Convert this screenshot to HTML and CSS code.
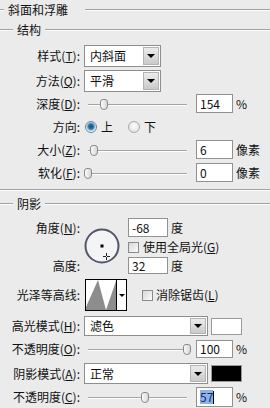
FILE: index.html
```html
<!DOCTYPE html>
<html lang="zh-CN">
<head>
    <meta charset="UTF-8">
    <meta name="viewport" content="width=device-width, initial-scale=1.0">
    <title>斜面和浮雕</title>
    <link rel="stylesheet" href="styles.css">
</head>
<body>
    <div class="panel">
        <div class="legend legend-main"><span class="lead"></span><span class="caption">斜面和浮雕</span><span class="rule"></span></div>
        <div class="legend legend-sub"><span class="lead"></span><span class="caption">结构</span><span class="rule"></span></div>

        <div class="row row-style">
            <span class="lbl">样式(<u>T</u>):</span>
            <div class="select sel-short"><span class="sel-text">内斜面</span><span class="sel-btn"><i class="tri"></i></span></div>
        </div>
        <div class="row row-method">
            <span class="lbl">方法(<u>Q</u>):</span>
            <div class="select sel-short"><span class="sel-text">平滑</span><span class="sel-btn"><i class="tri"></i></span></div>
        </div>
        <div class="row row-depth">
            <span class="lbl">深度(<u>D</u>):</span>
            <div class="slider"><span class="track"></span><span class="thumb" style="left:16px"></span></div>
            <div class="field">154</div><span class="unit">%</span>
        </div>
        <div class="row row-dir">
            <span class="lbl">方向:</span>
            <span class="radio on"></span><span class="opt">上</span>
            <span class="radio off"></span><span class="opt">下</span>
        </div>
        <div class="row row-size">
            <span class="lbl">大小(<u>Z</u>):</span>
            <div class="slider"><span class="track"></span><span class="thumb" style="left:6px"></span></div>
            <div class="field">6</div><span class="unit">像素</span>
        </div>
        <div class="row row-soft">
            <span class="lbl">软化(<u>F</u>):</span>
            <div class="slider"><span class="track"></span><span class="thumb" style="left:0px"></span></div>
            <div class="field">0</div><span class="unit">像素</span>
        </div>

        <div class="sep"></div>
        <div class="legend legend-shadow"><span class="lead"></span><span class="caption">阴影</span><span class="rule"></span></div>

        <div class="angle">
            <span class="lbl a-lbl1">角度(<u>N</u>):</span>
            <div class="dial">
                <svg width="36" height="36" viewBox="0 0 36 36">
                    <circle cx="18" cy="18" r="16.5" fill="#f4f4f7" stroke="#51576a" stroke-width="2"/>
                    <rect x="16.5" y="16.5" width="3" height="3" fill="#000"/>
                    <path d="M19 28.5h7M22.5 25v7" stroke="#222" stroke-width="1"/>
                    <rect x="22" y="28" width="1" height="1" fill="#fff"/>
                </svg>
            </div>
            <div class="a-val1"><div class="field f-angle">-68</div><span class="unit">度</span></div>
            <div class="a-check"><span class="check"></span><span class="opt">使用全局光(<u>G</u>)</span></div>
            <span class="lbl a-lbl3">高度:</span>
            <div class="a-val3"><div class="field f-alt">32</div><span class="unit">度</span></div>
        </div>

        <div class="row row-contour">
            <span class="lbl">光泽等高线:</span>
            <div class="contour">
                <svg class="curve" width="30" height="30" viewBox="0 0 30 30">
                    <polygon points="0,27 12,0 20,30 30,1 30,30 0,30" fill="#8d8d8d"/>
                </svg>
                <span class="contour-btn"><i class="tri"></i></span>
            </div>
            <span class="check c-anti"></span><span class="opt">消除锯齿(<u>L</u>)</span>
        </div>

        <div class="row row-hmode">
            <span class="lbl">高光模式(<u>H</u>):</span>
            <div class="select sel-long"><span class="sel-text">滤色</span><span class="sel-btn"><i class="tri"></i></span></div>
            <span class="swatch sw-white"></span>
        </div>
        <div class="row row-hop">
            <span class="lbl">不透明度(<u>O</u>):</span>
            <div class="slider"><span class="track"></span><span class="thumb" style="left:99px"></span></div>
            <div class="field">100</div><span class="unit">%</span>
        </div>
        <div class="row row-smode">
            <span class="lbl">阴影模式(<u>A</u>):</span>
            <div class="select sel-long"><span class="sel-text">正常</span><span class="sel-btn"><i class="tri"></i></span></div>
            <span class="swatch sw-black"></span>
        </div>
        <div class="row row-sop">
            <span class="lbl">不透明度(<u>C</u>):</span>
            <div class="slider"><span class="track"></span><span class="thumb" style="left:57px"></span></div>
            <div class="field"><span class="selected">57</span><span class="caret"></span></div><span class="unit">%</span>
        </div>
    </div>
</body>
</html>
```

FILE: styles.css
```css
body {
    margin: 0;
    background: #ebebeb;
    font-family: "Noto Sans CJK SC", "Noto Sans", sans-serif;
    font-size: 12px;
    line-height: 14px;
    color: #111;
}

u {
    text-decoration-thickness: 1px;
    text-underline-offset: 1px;
}

.panel {
    width: 270px;
    height: 408px;
    overflow: hidden;
    display: flex;
    flex-direction: column;
}

/* group titles and etched lines */
.legend {
    display: flex;
    align-items: center;
    height: 20px;
    flex-shrink: 0;
}

.legend .lead,
.legend .rule,
.sep {
    height: 0;
    border-top: 1px solid #a2a2a2;
    border-bottom: 1px solid #fdfdfd;
}

.legend .rule {
    flex: 1;
}

.legend-main .lead {
    width: 4px;
}

.legend-main .caption {
    padding: 0 17px 0 4px;
}

.legend-sub .lead,
.legend-shadow .lead {
    width: 13px;
}

.legend-sub .caption,
.legend-shadow .caption {
    padding: 0 4px;
}

.sep {
    flex-shrink: 0;
    margin-top: 7px;
}

.legend-shadow {
    margin-top: 3px;
}

/* rows */
.row {
    display: flex;
    align-items: center;
    flex-shrink: 0;
}

.lbl {
    width: 80px;
    flex-shrink: 0;
    text-align: right;
    white-space: nowrap;
}

.row-style { margin-top: 5px; height: 22px; }
.row-method { margin-top: 3px; height: 22px; }
.row-depth { margin-top: 2px; height: 19px; }
.row-dir { margin-top: 4px; height: 20px; }
.row-size { margin-top: 3px; height: 19px; }
.row-soft { margin-top: 4px; height: 19px; }
.row-contour { margin-top: 5px; height: 32px; }
.row-hmode { margin-top: 5px; height: 20px; }
.row-hop { margin-top: 4px; height: 18px; }
.row-smode { margin-top: 5px; height: 21px; }
.row-sop { margin-top: 3px; height: 20px; }

/* dropdowns */
.select {
    display: flex;
    height: 100%;
    box-sizing: border-box;
    margin-left: 4px;
    background: #fff;
    border: 1px solid #8e8e8e;
}

.sel-short { width: 77px; }
.sel-long { width: 124px; }

.sel-text {
    flex: 1;
    padding-left: 5px;
    align-self: center;
}

.sel-btn {
    width: 16px;
    margin: 1px;
    box-sizing: border-box;
    border: 1px solid #b4b4b4;
    background: linear-gradient(#ececec, #c9c9c9);
    display: flex;
    align-items: center;
    justify-content: center;
}

.tri {
    display: block;
    width: 0;
    height: 0;
    border-left: 4px solid transparent;
    border-right: 4px solid transparent;
    border-top: 4px solid #000;
}

/* sliders and fields */
.slider {
    position: relative;
    width: 107px;
    height: 100%;
    margin-left: 4px;
}

.track {
    position: absolute;
    left: 4px;
    right: 4px;
    top: 50%;
    height: 0;
    border-top: 1px solid #a4a4a4;
    border-bottom: 1px solid #fff;
}

.thumb {
    position: absolute;
    top: 50%;
    width: 8px;
    height: 11px;
    margin-top: -5px;
    box-sizing: border-box;
    border: 1px solid #8a8a8a;
    border-radius: 3px 3px 4px 4px;
    background: linear-gradient(90deg, #fafafa, #d8d8d8);
}

.field {
    width: 37px;
    height: 100%;
    box-sizing: border-box;
    margin-left: 5px;
    padding-left: 3px;
    background: #fff;
    border: 1px solid #919191;
    display: flex;
    align-items: center;
}

.unit {
    margin-left: 3px;
}

.selected {
    background: #8fb1e4;
    color: #0b2a78;
}

.caret {
    display: inline-block;
    width: 1px;
    height: 13px;
    background: #000;
}

/* radio and checkbox */
.radio {
    width: 12px;
    height: 12px;
    box-sizing: border-box;
    border-radius: 50%;
}

.radio.on {
    margin-left: 5px;
    border: 1px solid #6f8397;
    background: radial-gradient(circle at 50% 45%, #0f4f7f 0, #2c76a8 2.5px, #9cc6dc 4px, #f0f5f8 5px);
}

.radio.off {
    margin-left: 15px;
    border: 1px solid #a9a9a9;
    background: radial-gradient(circle at 50% 40%, #fdfdfd, #dcdcdc);
}

.radio + .opt {
    margin-left: 4px;
}

.check {
    width: 11px;
    height: 11px;
    flex-shrink: 0;
    box-sizing: border-box;
    border: 1px solid #8b8b8b;
    background: linear-gradient(135deg, #d7d7d7, #fbfbfb);
}

.check + .opt {
    margin-left: 4px;
}

.c-anti {
    margin-left: 15px;
}

.c-anti + .opt {
    margin-left: 3px;
}

/* angle block */
.angle {
    flex-shrink: 0;
    margin-top: 4px;
    display: grid;
    grid-template-columns: 80px 48px 1fr;
    grid-template-rows: 19px 20px 17px;
    align-items: center;
}

.a-lbl1 { grid-row: 1; grid-column: 1; }
.a-lbl3 { grid-row: 3; grid-column: 1; }

.dial {
    grid-row: 1 / 4;
    grid-column: 2;
    margin-left: 4px;
    height: 36px;
}

.dial svg {
    display: block;
}

.a-val1,
.a-val3,
.a-check {
    grid-column: 3;
    display: flex;
    align-items: center;
    height: 100%;
}

.a-val1 { grid-row: 1; }
.a-check { grid-row: 2; }
.a-val3 { grid-row: 3; }

.f-angle,
.f-alt {
    width: 40px;
    margin-left: 0;
}

/* contour picker */
.contour {
    width: 42px;
    height: 32px;
    box-sizing: border-box;
    margin-left: 5px;
    border: 1px solid #000;
    background: #fff;
    display: flex;
}

.curve {
    display: block;
    align-self: flex-end;
}

.contour-btn {
    flex: 1;
    border-left: 1px solid #000;
    display: flex;
    align-items: center;
    justify-content: center;
}

.contour-btn .tri {
    border-left-width: 3px;
    border-right-width: 3px;
    border-top-width: 3px;
}

/* colour swatches */
.swatch {
    width: 31px;
    height: 17px;
    box-sizing: border-box;
    margin-left: 3px;
    border: 1px solid #9a9a9a;
}

.sw-white {
    background: #fff;
}

.sw-black {
    background: #000;
}
```
